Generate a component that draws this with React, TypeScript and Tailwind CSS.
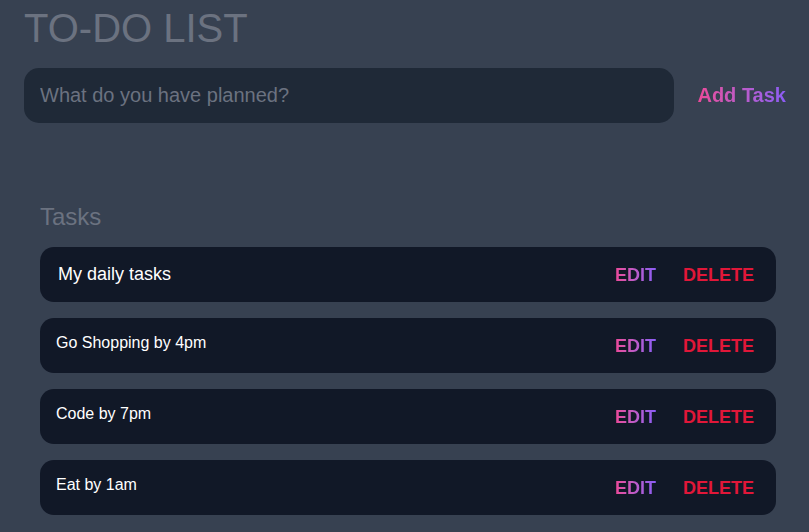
import React from "react";

const tasks = ["Go Shopping by 4pm", "Code by 7pm", "Eat by 1am"];

function Row({ children, first }: { children: React.ReactNode; first?: boolean }) {
  return (
    <div className="flex h-[55px] items-center justify-between rounded-[14px] bg-[#111827] pl-4 pr-[22px]">
      {first ? (
        <span className="ml-[2px] text-[18px] text-white">{children}</span>
      ) : (
        <span className="pb-[6px] text-[16px] text-white">{children}</span>
      )}
      <div className="flex items-center gap-[27px] text-[18px] font-bold leading-none">
        <button className="bg-gradient-to-r from-[#ec4899] to-[#8b5cf6] bg-clip-text text-transparent">EDIT</button>
        <button className="text-[#e11739]">DELETE</button>
      </div>
    </div>
  );
}

export default function App() {
  return (
    <div
      className="min-h-[532px] w-full bg-[#374151] pl-6 pr-[23px] pt-2"
      style={{ fontFamily: '"Liberation Sans", Arial, sans-serif' }}
    >
      <h1 className="text-[40px] leading-none text-[#6b7280]">TO-DO LIST</h1>
      <div className="mt-5 flex items-center gap-[23px]">
        <input
          className="h-[55px] flex-1 rounded-[15px] bg-[#1f2937] px-4 text-[20px] text-white outline-none placeholder:text-[#6b7280]"
          placeholder="What do you have planned?"
        />
        <button className="-mt-[2px] bg-gradient-to-r from-[#ec4899] to-[#8b5cf6] bg-clip-text text-[20px] font-bold text-transparent">
          Add Task
        </button>
      </div>
      <div className="pl-4 pr-[10px]">
        <h2 className="mt-[82px] text-2xl leading-none text-[#6b7280]">Tasks</h2>
        <div className="mt-[18px] flex flex-col gap-[16px]">
          <Row first>My daily tasks</Row>
          {tasks.map((t) => (
            <Row key={t}>{t}</Row>
          ))}
        </div>
      </div>
    </div>
  );
}
